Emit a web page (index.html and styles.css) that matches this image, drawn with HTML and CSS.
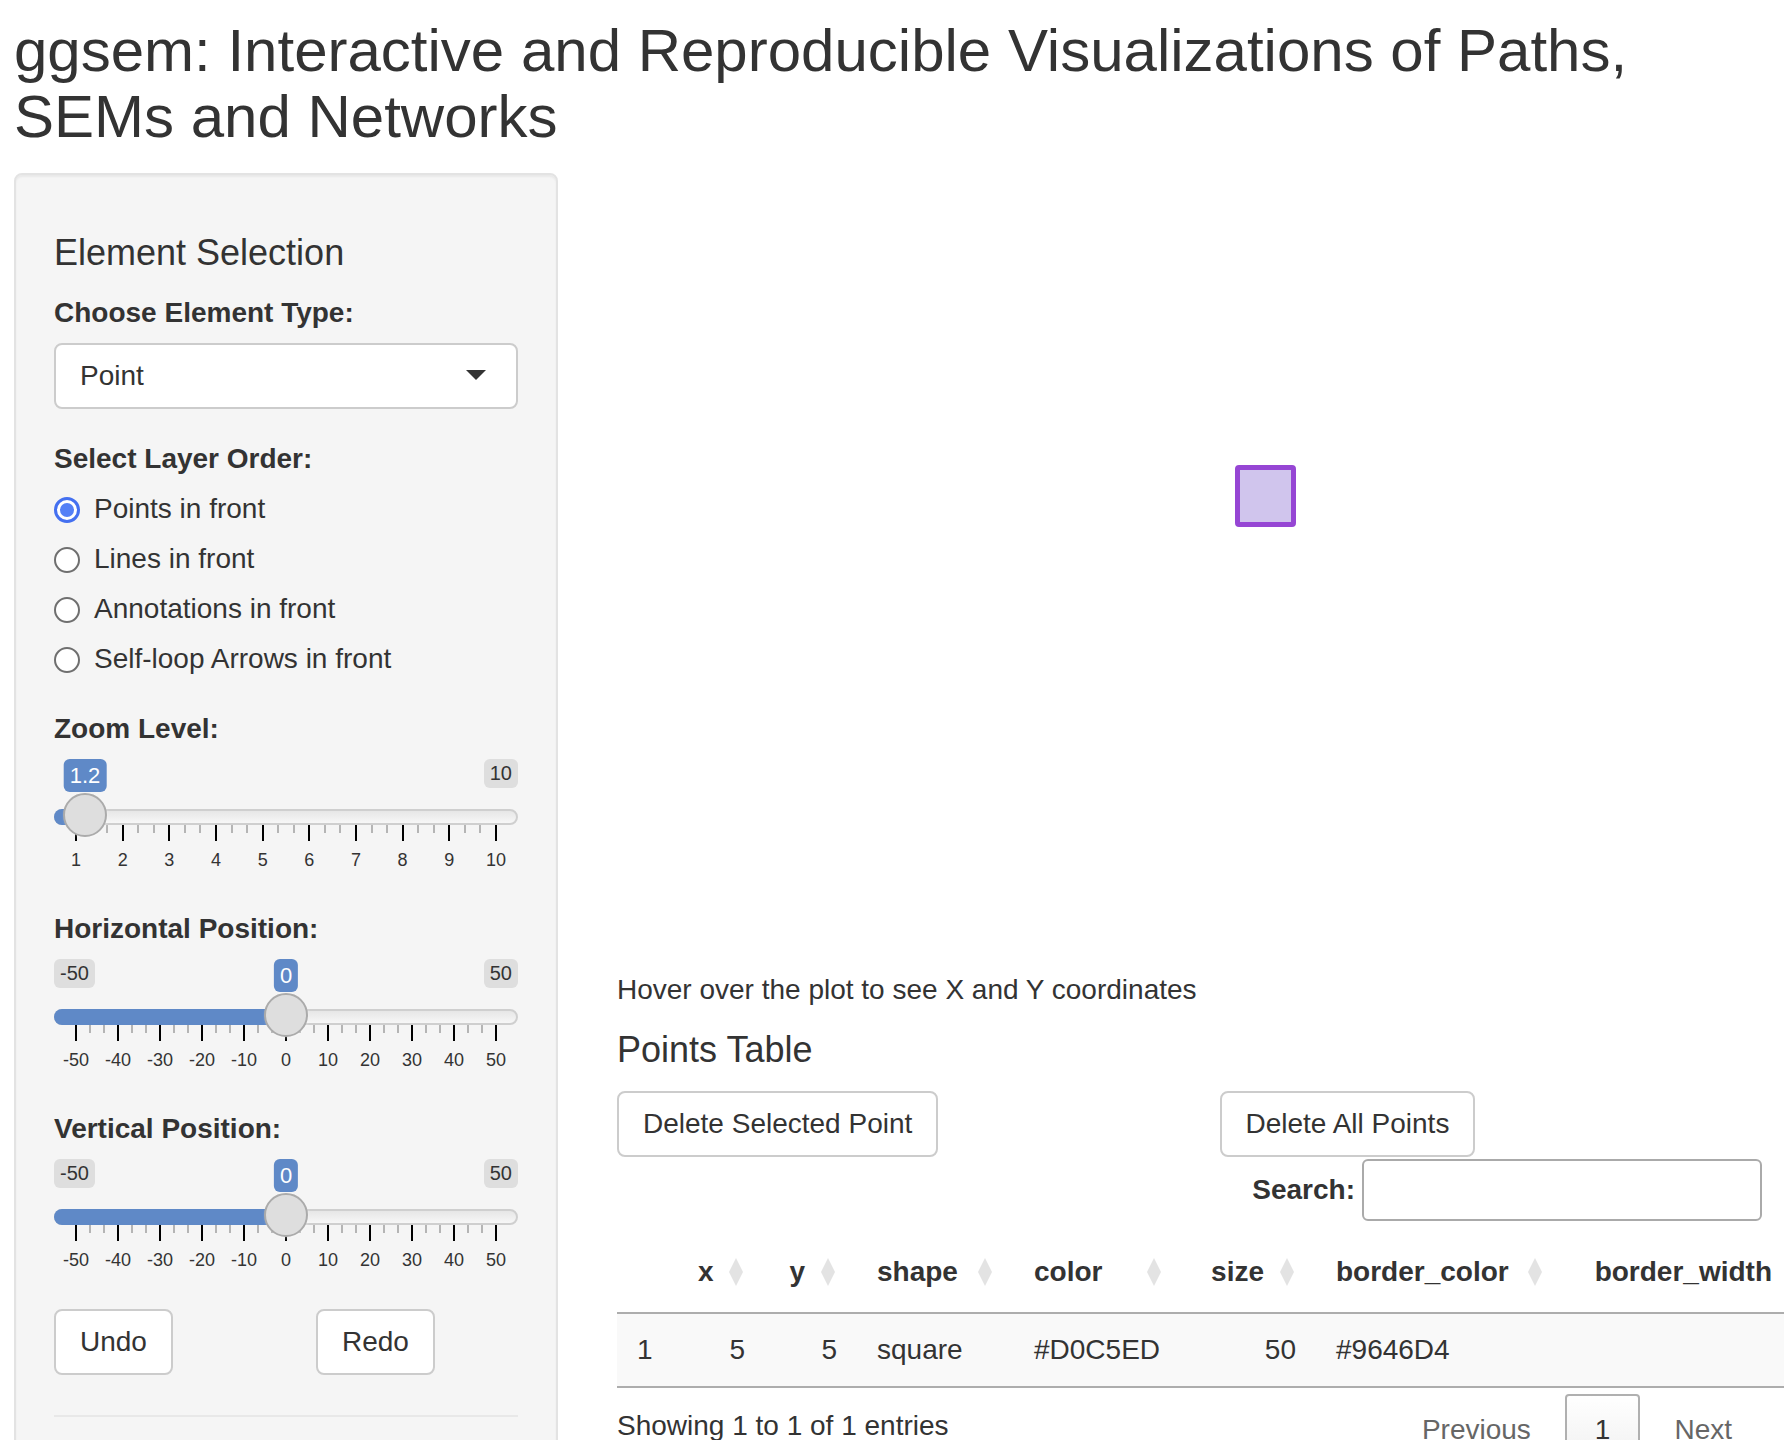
FILE: index.html
```html
<!DOCTYPE html>
<html lang="en">
<head>
<meta charset="utf-8">
<title>ggsem</title>
<link rel="stylesheet" href="styles.css">
</head>
<body>
<h2 class="title">ggsem: Interactive and Reproducible Visualizations of Paths,<br>SEMs and Networks</h2>
<div class="layout">
  <aside class="well">
    <h4 class="heading">Element Selection</h4>
    <div class="form-group">
      <label class="control-label">Choose Element Type:</label>
      <div class="select"><span>Point</span><span class="caret"></span></div>
    </div>
    <div class="form-group">
      <label class="control-label">Select Layer Order:</label>
      <div class="radios">
        <div class="radio"><span class="dot checked"></span>Points in front</div>
        <div class="radio"><span class="dot"></span>Lines in front</div>
        <div class="radio"><span class="dot"></span>Annotations in front</div>
        <div class="radio"><span class="dot"></span>Self-loop Arrows in front</div>
      </div>
    </div>
    <div class="form-group">
      <label class="control-label">Zoom Level:</label>
      <div class="irs">
        <span class="irs-line"></span>
        <span class="irs-bar" style="width:31px"></span>
        <span class="irs-max">10</span>
        <div class="irs-grid grid-9"></div>
        <div class="irs-grid-text">
          <span class="gl"><span>1</span></span><span class="gl"><span>2</span></span><span class="gl"><span>3</span></span><span class="gl"><span>4</span></span><span class="gl"><span>5</span></span><span class="gl"><span>6</span></span><span class="gl"><span>7</span></span><span class="gl"><span>8</span></span><span class="gl"><span>9</span></span><span class="gl"><span>10</span></span>
        </div>
        <span class="irs-handle" style="left:31px"></span>
        <span class="irs-single" style="left:31px">1.2</span>
      </div>
    </div>
    <div class="form-group">
      <label class="control-label">Horizontal Position:</label>
      <div class="irs">
        <span class="irs-line"></span>
        <span class="irs-bar" style="width:232px"></span>
        <span class="irs-min">-50</span>
        <span class="irs-max">50</span>
        <div class="irs-grid grid-10"></div>
        <div class="irs-grid-text">
          <span class="gl"><span>-50</span></span><span class="gl"><span>-40</span></span><span class="gl"><span>-30</span></span><span class="gl"><span>-20</span></span><span class="gl"><span>-10</span></span><span class="gl"><span>0</span></span><span class="gl"><span>10</span></span><span class="gl"><span>20</span></span><span class="gl"><span>30</span></span><span class="gl"><span>40</span></span><span class="gl"><span>50</span></span>
        </div>
        <span class="irs-handle" style="left:232px"></span>
        <span class="irs-single" style="left:232px">0</span>
      </div>
    </div>
    <div class="form-group">
      <label class="control-label">Vertical Position:</label>
      <div class="irs">
        <span class="irs-line"></span>
        <span class="irs-bar" style="width:232px"></span>
        <span class="irs-min">-50</span>
        <span class="irs-max">50</span>
        <div class="irs-grid grid-10"></div>
        <div class="irs-grid-text">
          <span class="gl"><span>-50</span></span><span class="gl"><span>-40</span></span><span class="gl"><span>-30</span></span><span class="gl"><span>-20</span></span><span class="gl"><span>-10</span></span><span class="gl"><span>0</span></span><span class="gl"><span>10</span></span><span class="gl"><span>20</span></span><span class="gl"><span>30</span></span><span class="gl"><span>40</span></span><span class="gl"><span>50</span></span>
        </div>
        <span class="irs-handle" style="left:232px"></span>
        <span class="irs-single" style="left:232px">0</span>
      </div>
    </div>
    <div class="btn-row">
      <div><button class="btn">Undo</button></div>
      <div><button class="btn">Redo</button></div>
    </div>
    <hr class="sep">
  </aside>
  <main class="main">
    <div class="plot">
      <div class="pt-square"></div>
    </div>
    <div class="hover-text">Hover over the plot to see X and Y coordinates</div>
    <h4 class="heading">Points Table</h4>
    <div class="btn-row main-btns">
      <div><button class="btn">Delete Selected Point</button></div>
      <div><button class="btn">Delete All Points</button></div>
    </div>
    <div class="dt-filter">
      <label class="filter-label">Search:</label>
      <input class="filter-input" type="search" aria-label="Search">
    </div>
    <div class="dt-table-wrap">
      <table class="dt">
        <colgroup>
          <col class="c0"><col class="c1"><col class="c2"><col class="c3"><col class="c4"><col class="c5"><col class="c6"><col class="c7">
        </colgroup>
        <thead>
          <tr>
            <th class="plain"></th>
            <th class="sort right">x</th>
            <th class="sort right">y</th>
            <th class="sort">shape</th>
            <th class="sort">color</th>
            <th class="sort right">size</th>
            <th class="sort">border_color</th>
            <th class="sort right">border_width</th>
          </tr>
        </thead>
        <tbody>
          <tr>
            <td>1</td>
            <td class="right">5</td>
            <td class="right">5</td>
            <td>square</td>
            <td>#D0C5ED</td>
            <td class="right">50</td>
            <td>#9646D4</td>
            <td class="right"></td>
          </tr>
        </tbody>
      </table>
    </div>
    <div class="dt-bottom">
      <div class="dt-info">Showing 1 to 1 of 1 entries</div>
      <div class="dt-paginate">
        <span class="pg disabled">Previous</span><span class="pg current">1</span><span class="pg disabled">Next</span>
      </div>
    </div>
  </main>
</div>
</body>
</html>
```

FILE: styles.css
```css
* { box-sizing: border-box; }

html, body {
  height: 1440px;
  overflow: hidden;
}

body {
  margin: 0;
  padding: 0 22px 0 14px;
  font-family: "Liberation Sans", Arial, sans-serif;
  font-size: 28px;
  line-height: 40px;
  color: #333;
  background: #fff;
}

.title {
  font-size: 60px;
  font-weight: 400;
  line-height: 66px;
  margin: 18px 0 23px 0;
}

.layout {
  display: flex;
  align-items: flex-start;
  gap: 59px;
}

.well {
  flex: 0 0 544px;
  width: 544px;
  min-height: 1400px;
  padding: 38px;
  background: #f5f5f5;
  border: 2px solid #e3e3e3;
  border-radius: 8px;
  box-shadow: inset 0 2px 2px rgba(0, 0, 0, 0.05);
}

.heading {
  font-size: 36px;
  font-weight: 400;
  line-height: 39.6px;
  margin: 20px 0 20px;
}

.form-group { margin-bottom: 30px; }

.control-label {
  display: block;
  font-weight: 700;
  margin-bottom: 10px;
}

/* selectize */
.select {
  height: 66px;
  border: 2px solid #ccc;
  border-radius: 8px;
  background: #fff;
  padding: 0 30px 0 24px;
  display: flex;
  align-items: center;
  justify-content: space-between;
}
.caret {
  width: 0;
  height: 0;
  border-left: 10px solid transparent;
  border-right: 10px solid transparent;
  border-top: 10px solid #333;
  margin-top: -1px;
}

/* radios */
.radios { display: flex; flex-direction: column; gap: 10px; }
.radio {
  display: flex;
  align-items: center;
  height: 40px;
}
.dot {
  flex: 0 0 26px;
  width: 26px;
  height: 26px;
  border-radius: 50%;
  border: 2px solid #6f6f6f;
  background: #fff;
  margin-right: 14px;
  margin-top: 3px;
  position: relative;
}
.dot.checked {
  border: 3px solid #4470f0;
}
.dot.checked::after {
  content: "";
  position: absolute;
  left: 3px;
  top: 3px;
  width: 14px;
  height: 14px;
  border-radius: 50%;
  background: #5480f6;
}

/* range slider */
.irs {
  position: relative;
  height: 120px;
}
.irs-line {
  position: absolute;
  left: 0;
  right: 0;
  top: 50px;
  height: 16px;
  border: 2px solid #cfcfcf;
  border-radius: 8px;
  background: linear-gradient(to bottom, #dedede -50%, #fff 150%);
}
.irs-bar {
  position: absolute;
  left: 0;
  top: 50px;
  height: 16px;
  background: #5f89c7;
  border-radius: 8px 0 0 8px;
}
.irs-handle {
  position: absolute;
  top: 34px;
  width: 44px;
  height: 44px;
  margin-left: -22px;
  border-radius: 50%;
  background: #dedede;
  border: 2px solid #ababab;
  box-shadow: 1px 1px 3px rgba(255, 255, 255, 0.3);
  z-index: 2;
}
.irs-single {
  position: absolute;
  top: 0;
  transform: translateX(-50%);
  background: #5f89c7;
  color: #fff;
  font-size: 22px;
  line-height: 29px;
  padding: 2px 6px;
  border-radius: 6px;
  z-index: 3;
}
.irs-min,
.irs-max {
  position: absolute;
  top: 0;
  background: #dedede;
  color: #333;
  font-size: 20px;
  line-height: 25px;
  padding: 2px 6px;
  border-radius: 6px;
}
.irs-min { left: 0; }
.irs-max { right: 0; }

.irs-grid {
  position: absolute;
  top: 66px;
  left: 21px;
  width: 422px;
  height: 16px;
}
.grid-9 {
  background:
    repeating-linear-gradient(to right, #000 0 2px, transparent 2px 46.6667px) 0 0 / 100% 16px no-repeat,
    repeating-linear-gradient(to right, #b5b5b5 0 2px, transparent 2px 15.5556px) 0 0 / 100% 8px no-repeat;
}
.grid-10 {
  background:
    repeating-linear-gradient(to right, #000 0 2px, transparent 2px 42px) 0 0 / 100% 16px no-repeat,
    repeating-linear-gradient(to right, #b5b5b5 0 2px, transparent 2px 14px) 0 0 / 100% 8px no-repeat;
}
.irs-grid-text {
  position: absolute;
  top: 91px;
  left: 22px;
  width: 420px;
  display: flex;
  justify-content: space-between;
  font-size: 18px;
  line-height: 20px;
  color: #333;
}
.gl {
  width: 0;
  display: flex;
  justify-content: center;
  white-space: nowrap;
}

/* buttons */
.btn-row {
  display: grid;
  grid-template-columns: 1fr 1fr;
  column-gap: 60px;
}
.btn {
  font-family: inherit;
  font-size: 28px;
  line-height: 40px;
  color: #333;
  background: #fff;
  border: 2px solid #ccc;
  border-radius: 8px;
  padding: 11px 24px;
}

.sep {
  margin: 40px 0 0;
  border: 0;
  border-top: 2px solid #e8e8e8;
}

/* main */
.main {
  flex: 0 0 1145px;
  width: 1145px;
}
.plot {
  position: relative;
  height: 797px;
}
.pt-square {
  position: absolute;
  left: 618px;
  top: 292px;
  width: 61px;
  height: 62px;
  background: #d0c5ed;
  border: 5px solid #9646d4;
  border-radius: 4px;
}
.hover-text { height: 40px; }

.main .heading { margin-bottom: 21px; }

.main-btns { margin-bottom: 2px; }

.dt-filter {
  display: flex;
  justify-content: flex-end;
  align-items: center;
  gap: 7px;
  margin-bottom: 11px;
}
.filter-label { font-weight: 700; }
.filter-input {
  width: 400px;
  height: 62px;
  border: 2px solid #aaa;
  border-radius: 6px;
  background: #fff;
  padding: 10px;
  font: inherit;
}

.dt-table-wrap { width: 1145px; overflow: visible; }
.dt {
  table-layout: fixed;
  width: 1207px;
  border-collapse: separate;
  border-spacing: 0;
}
.c0 { width: 61px; }
.c1 { width: 87px; }
.c2 { width: 92px; }
.c3 { width: 157px; }
.c4 { width: 169px; }
.c5 { width: 133px; }
.c6 { width: 248px; }
.c7 { width: 260px; }

.dt th {
  position: relative;
  text-align: left;
  font-weight: 700;
  padding: 20px 20px;
  border-bottom: 2px solid #adadad;
  white-space: nowrap;
}
.dt th.sort { padding-right: 52px; }
.dt th.sort::before,
.dt th.sort::after {
  content: "";
  position: absolute;
  right: 22px;
  width: 0;
  height: 0;
  border-left: 7.5px solid transparent;
  border-right: 7.5px solid transparent;
}
.dt th.sort::before {
  bottom: 50%;
  border-bottom: 14px solid #e3e3e3;
}
.dt th.sort::after {
  top: 50%;
  border-top: 14px solid #e3e3e3;
}
.dt .right { text-align: right; }
.dt td {
  padding: 16px 20px;
  background: #f9f9f9;
  border-bottom: 2px solid #adadad;
  white-space: nowrap;
}

.dt-bottom {
  display: flex;
  justify-content: space-between;
  align-items: flex-start;
}
.dt-info { padding-top: 18px; }
.dt-paginate { padding-top: 6px; display: flex; }
.pg {
  display: inline-block;
  padding: 14px 28px;
  margin-left: 4px;
  border: 2px solid transparent;
  border-radius: 4px;
}
.pg.disabled { color: #666; }
.pg.current {
  color: #333;
  border-color: #b0b0b0;
  background: linear-gradient(to bottom, #fff 0%, #f0f0f0 100%);
}
```
